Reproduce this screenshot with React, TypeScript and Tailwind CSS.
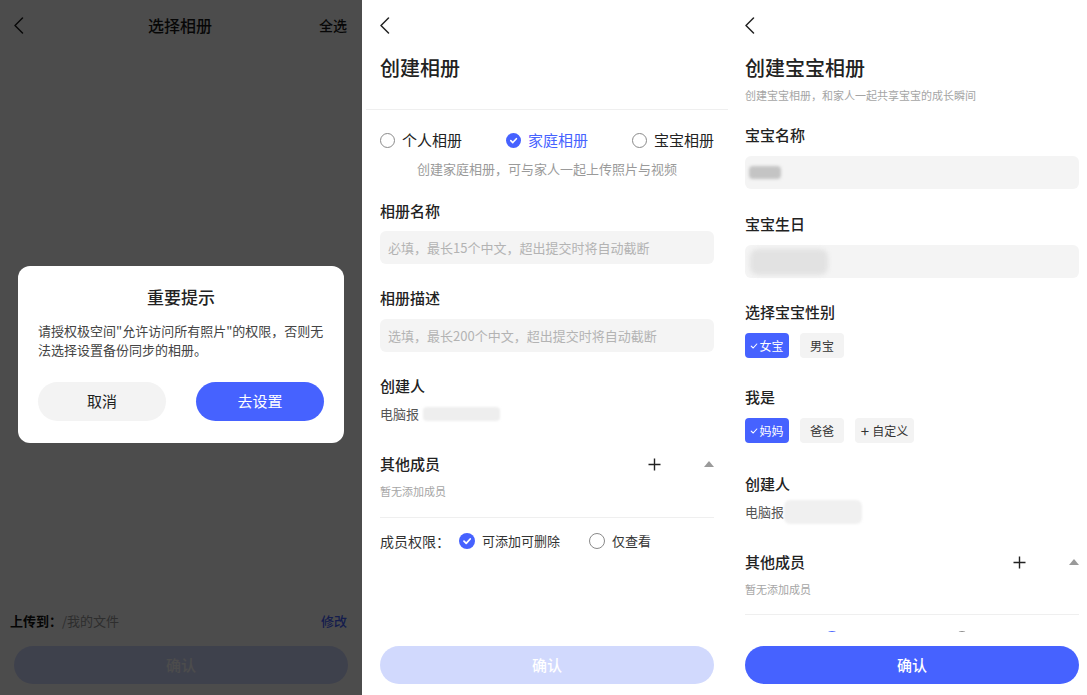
import React from "react";

const BLUE = "bg-[#4662ff]";

function Chevron() {
  return (
    <svg width="11" height="17" viewBox="0 0 11 17" fill="none">
      <path d="M9.5 1 L2 8.5 L9.5 16" stroke="currentColor" strokeWidth="1.5" strokeLinecap="round" strokeLinejoin="round" />
    </svg>
  );
}

function Check({ size = 10, w = 2 }: { size?: number; w?: number }) {
  return (
    <svg width={size} height={size} viewBox="0 0 10 10" fill="none">
      <path d="M2 5.2 L4.2 7.3 L8.2 3" stroke="white" strokeWidth={w} strokeLinecap="round" strokeLinejoin="round" />
    </svg>
  );
}

function RadioOn({ size }: { size: number }) {
  return (
    <span
      className={`flex items-center justify-center rounded-full ${BLUE} shrink-0`}
      style={{ width: size, height: size }}
    >
      <Check size={Math.round(size * 0.62)} w={1.8} />
    </span>
  );
}

function RadioOff({ size }: { size: number }) {
  return (
    <span
      className="block rounded-full border-[1.5px] border-[#8a8a8a] shrink-0"
      style={{ width: size, height: size }}
    />
  );
}

function Plus() {
  return (
    <svg width="13" height="13" viewBox="0 0 13 13" fill="none">
      <path d="M6.5 0.5 V12.5 M0.5 6.5 H12.5" stroke="#222" strokeWidth="1.4" />
    </svg>
  );
}

function Tri() {
  return (
    <svg width="10" height="6" viewBox="0 0 10 6">
      <path d="M5 0 L10 6 L0 6 Z" fill="#9a9a9a" />
    </svg>
  );
}

function LeftPanel() {
  return (
    <div className="relative w-[362px] h-full flex flex-col bg-white shrink-0 overflow-hidden">
      <div className="h-[50px] grid grid-cols-[1fr_auto_1fr] items-center pl-[13px] pr-[15px] text-[#1a1a1a]">
        <div className="flex items-center">
          <Chevron />
        </div>
        <div className="text-center text-[16px] font-medium leading-[22px]">选择相册</div>
        <div className="text-right text-[14px] font-medium leading-[20px]">全选</div>
      </div>
      <div className="flex-1" />
      <div className="flex items-center pl-[10px] pr-[15px] h-[20px] text-[13px] leading-[20px]">
        <span className="font-bold text-[#111]">上传到：</span>
        <span className="text-[#999]">/我的文件</span>
        <span className="ml-auto text-[#4662ff] font-medium">修改</span>
      </div>
      <div className="mt-[15px] mb-[11px] mx-[14px] h-[38px] rounded-full bg-[#d1d9fd] flex items-center justify-center text-white text-[15px] font-medium">
        确认
      </div>
      <div className="absolute inset-0 bg-black/70 flex justify-center items-start pt-[266px]">
        <div className="w-[326px] bg-white rounded-[12px] px-[20px] pt-[19px] pb-[22px] flex flex-col">
          <div className="text-center text-[17px] leading-[24px] font-medium text-[#222]">重要提示</div>
          <div className="mt-[12px] text-[13px] leading-[19px] text-[#444]">
            请授权极空间"允许访问所有照片"的权限，否则无法选择设置备份同步的相册。
          </div>
          <div className="mt-[23px] flex justify-between">
            <div className="w-[128px] h-[39px] rounded-full bg-[#f3f3f3] flex items-center justify-center text-[15px] text-[#222]">取消</div>
            <div className={`w-[128px] h-[39px] rounded-full ${BLUE} flex items-center justify-center text-[15px] text-white`}>去设置</div>
          </div>
        </div>
      </div>
    </div>
  );
}

function Label({ children, mt }: { children: React.ReactNode; mt: string }) {
  return <div className={`${mt} text-[15px] leading-[22px] font-medium text-[#222]`}>{children}</div>;
}

function MiddlePanel() {
  return (
    <div className="w-[366px] h-full flex flex-col bg-white shrink-0">
      <div className="h-[50px] flex items-center pl-[17px] text-[#222] shrink-0">
        <Chevron />
      </div>
      <div className="pl-[18px] pr-[14px]">
        <div className="mt-[4px] text-[20px] leading-[28px] font-medium text-[#222]">创建相册</div>
      </div>
      <div className="ml-[4px] h-px bg-[#efefef] mt-[27px] shrink-0" />
      <div className="pl-[18px] pr-[14px] flex flex-col flex-1">
        <div className="mt-[19px] h-[22px] flex items-center justify-between text-[15px] text-[#222]">
          <div className="flex items-center gap-[7px]">
            <RadioOff size={15} />
            <span>个人相册</span>
          </div>
          <div className="flex items-center gap-[7px] text-[#4662ff]">
            <RadioOn size={15} />
            <span>家庭相册</span>
          </div>
          <div className="flex items-center gap-[7px]">
            <RadioOff size={15} />
            <span>宝宝相册</span>
          </div>
        </div>
        <div className="mt-[9px] text-center text-[13px] leading-[18px] text-[#9a9a9a]">创建家庭相册，可与家人一起上传照片与视频</div>
        <Label mt="mt-[22px]">相册名称</Label>
        <div className="mt-[9px] h-[33px] rounded-[6px] bg-[#f4f4f4] flex items-center px-[8px] text-[13px] text-[#b3b3b3]">
          必填，最长15个中文，超出提交时将自动截断
        </div>
        <Label mt="mt-[23px]">相册描述</Label>
        <div className="mt-[10px] h-[33px] rounded-[6px] bg-[#f4f4f4] flex items-center px-[8px] text-[13px] text-[#b3b3b3]">
          选填，最长200个中文，超出提交时将自动截断
        </div>
        <Label mt="mt-[23px]">创建人</Label>
        <div className="mt-[8px] h-[18px] flex items-center text-[13px] text-[#555]">
          <span>电脑报</span>
          <span className="ml-[4px] w-[77px] h-[14px] rounded-[4px] bg-[#eeeeee] blur-[1px]" />
        </div>
        <div className="mt-[30px] h-[22px] flex items-center">
          <span className="flex-1 text-[15px] font-medium text-[#222]">其他成员</span>
          <Plus />
          <span className="ml-[43px]"><Tri /></span>
        </div>
        <div className="mt-[8px] text-[11px] leading-[16px] text-[#a5a5a5]">暂无添加成员</div>
        <div className="mt-[18px] h-px bg-[#efefef]" />
        <div className="mt-[13px] h-[20px] flex items-center text-[13px] text-[#333]">
          <span className="text-[14px]">成员权限：</span>
          <span className="ml-[9px]"><RadioOn size={16} /></span>
          <span className="ml-[7px]">可添加可删除</span>
          <span className="ml-[29px]"><RadioOff size={16} /></span>
          <span className="ml-[7px]">仅查看</span>
        </div>
        <div className="mt-auto mb-[11px] h-[38px] rounded-full bg-[#d1d9fd] flex items-center justify-center text-white text-[15px] font-medium">
          确认
        </div>
      </div>
    </div>
  );
}

function Chip({ on, children, w }: { on?: boolean; children: React.ReactNode; w: string }) {
  return (
    <div
      className={`${w} h-[25px] rounded-[4px] flex items-center justify-center text-[12px] ${
        on ? "bg-[#4662ff] text-white" : "bg-[#f3f3f3] text-[#333]"
      }`}
    >
      {on && (
        <svg width="8" height="8" viewBox="0 0 10 10" fill="none" className="mr-[1px]">
          <path d="M1.5 5.2 L4 7.5 L8.5 2.5" stroke="white" strokeWidth="1.4" strokeLinecap="round" strokeLinejoin="round" />
        </svg>
      )}
      {children}
    </div>
  );
}

function RightPanel() {
  return (
    <div className="relative flex-1 h-full flex flex-col bg-white overflow-hidden">
      <div className="h-[50px] flex items-center pl-[16px] text-[#222] shrink-0">
        <Chevron />
      </div>
      <div className="pl-[17px] pr-[8px] flex flex-col">
        <div className="mt-[4px] text-[20px] leading-[28px] font-medium text-[#222]">创建宝宝相册</div>
        <div className="mt-[5px] text-[11px] leading-[16px] text-[#a5a5a5]">创建宝宝相册，和家人一起共享宝宝的成长瞬间</div>
        <Label mt="mt-[21px]">宝宝名称</Label>
        <div className="mt-[10px] h-[33px] rounded-[6px] bg-[#f4f4f4] flex items-center px-[4px]">
          <span className="w-[32px] h-[13px] rounded-[4px] bg-[#c4c4c4] blur-[1.5px]" />
        </div>
        <Label mt="mt-[24px]">宝宝生日</Label>
        <div className="mt-[10px] h-[33px] rounded-[6px] bg-[#f4f4f4] flex items-center px-[5px]">
          <span className="w-[78px] h-[26px] rounded-[8px] bg-[#e2e2e2] blur-[2px]" />
        </div>
        <Label mt="mt-[23px]">选择宝宝性别</Label>
        <div className="mt-[10px] flex gap-[11px]">
          <Chip on w="w-[44px]">女宝</Chip>
          <Chip w="w-[44px]">男宝</Chip>
        </div>
        <Label mt="mt-[28px]">我是</Label>
        <div className="mt-[10px] flex gap-[11px]">
          <Chip on w="w-[44px]">妈妈</Chip>
          <Chip w="w-[44px]">爸爸</Chip>
          <Chip w="w-[59px]">
            <span className="text-[15px] leading-none mr-[3px] text-[#333]">+</span>自定义
          </Chip>
        </div>
        <Label mt="mt-[30px]">创建人</Label>
        <div className="mt-[8px] h-[18px] flex items-center text-[13px] text-[#555]">
          <span>电脑报</span>
          <span className="w-[78px] h-[24px] rounded-[6px] bg-[#f0f0f0] blur-[1px]" />
        </div>
        <div className="mt-[30px] h-[22px] flex items-center">
          <span className="flex-1 text-[15px] font-medium text-[#222]">其他成员</span>
          <Plus />
          <span className="ml-[43px]"><Tri /></span>
        </div>
        <div className="mt-[8px] text-[11px] leading-[16px] text-[#a5a5a5]">暂无添加成员</div>
        <div className="mt-[17px] h-px bg-[#efefef]" />
        <div className="mt-[14px] h-[20px] flex items-center text-[13px] text-[#333]">
          <span className="text-[14px]">成员权限：</span>
          <span className="ml-[9px]"><RadioOn size={16} /></span>
          <span className="ml-[7px]">可添加可删除</span>
          <span className="ml-[29px]"><RadioOff size={16} /></span>
          <span className="ml-[7px]">仅查看</span>
        </div>
      </div>
      <div className="absolute left-0 right-0 bottom-0 h-[63px] bg-white pl-[17px] pr-[8px] pt-[14px]">
        <div className={`h-[38px] rounded-full ${BLUE} flex items-center justify-center text-white text-[15px] font-medium`}>
          确认
        </div>
      </div>
    </div>
  );
}

export default function App() {
  return (
    <div className="w-[1087px] h-[695px] flex overflow-hidden bg-white font-['Noto_Sans_CJK_SC','Noto_Sans',sans-serif]">
      <LeftPanel />
      <MiddlePanel />
      <RightPanel />
    </div>
  );
}
